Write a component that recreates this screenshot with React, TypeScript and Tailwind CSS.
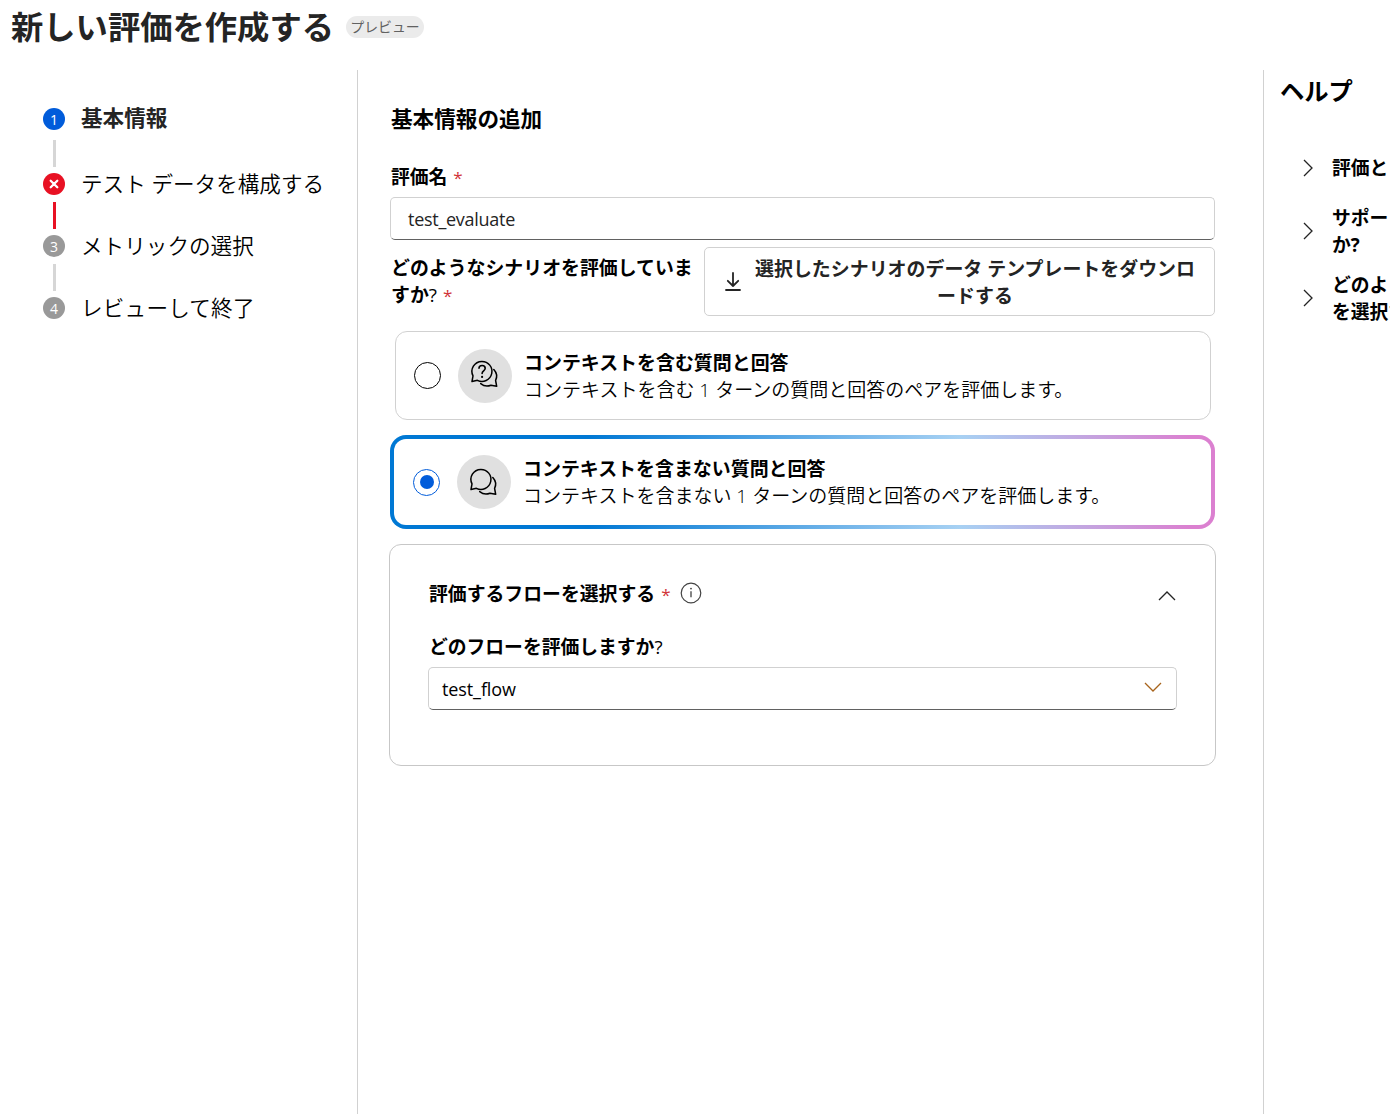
import React from "react";

const steps = [
  { mark: "1", label: "基本情報", circle: "bg-[#015cda]", gap: "mb-[43px]", line: "bg-[#d6d6d6] top-[32px]", text: "font-bold text-[#242424] -top-[1px]" },
  { mark: "x", label: "テスト データを構成する", circle: "bg-[#e81123]", gap: "mb-[40px]", line: "bg-[#e81123] top-[29px]", text: "font-[350] text-black" },
  { mark: "3", label: "メトリックの選択", circle: "bg-[#999999]", gap: "mb-[40px]", line: "bg-[#d6d6d6] top-[29px]", text: "font-[350] text-black" },
  { mark: "4", label: "レビューして終了", circle: "bg-[#999999]", gap: "", line: "", text: "font-[350] text-black tracking-[0.2px]" },
];

function Steps() {
  return (
    <ol className="flex flex-col pl-[43px] pt-[38px]">
      {steps.map((s) => (
        <li key={s.mark} className={`relative flex h-[22px] items-center ${s.gap}`}>
          <span className={`flex size-[22px] shrink-0 items-center justify-center rounded-full text-[14px] leading-none text-white ${s.circle}`}>
            {s.mark === "x" ? (
              <svg width="10" height="10" viewBox="0 0 10 10" stroke="white" strokeWidth="2.3" strokeLinecap="round">
                <path d="M1.7 1.7l6.6 6.6M8.3 1.7l-6.6 6.6" />
              </svg>
            ) : (
              <span className="relative top-[0.5px]">{s.mark}</span>
            )}
          </span>
          <span className={`relative ml-[16px] whitespace-nowrap text-[21.6px] leading-[28px] ${s.text}`}>{s.label}</span>
          {s.line && <span className={`absolute left-[10px] h-[27px] w-[3px] ${s.line}`} />}
        </li>
      ))}
    </ol>
  );
}

function Star() {
  return <span className="ml-[6px] text-[17px] font-normal text-[#d13438]">*</span>;
}

function Chat({ question = false }: { question?: boolean }) {
  return (
    <span className="flex size-[54px] shrink-0 items-center justify-center rounded-full bg-[#e0e0e0]">
      <svg className={question ? "" : "relative top-[2px]"} width="54" height="54" viewBox="0 0 54 54" fill="none" stroke="#000" strokeWidth="1.5" strokeLinejoin="round" strokeLinecap="round">
        <path d="M23.8 12.4a10 10 0 1 1-4.4 18.9l-5.4 1.2 1-5.6A10 10 0 0 1 23.8 12.4z" />
        <path d="M35.8 20.5a10 10 0 0 1 1.8 11l1.1 5.8-5.8-1.1a10.2 10.2 0 0 1-10.2-1.6" />
        {question && (
          <g>
            <path d="M21 19.2c0-3.6 6.2-3.7 6.2.1 0 2.5-3.1 2.6-3.1 5.1" strokeWidth="1.6" />
            <circle cx="24.1" cy="27.9" r="1.1" fill="#000" stroke="none" />
          </g>
        )}
      </svg>
    </span>
  );
}

function Chevron({ className, color = "#242424" }: { className: string; color?: string }) {
  return (
    <svg className={className} width="18" height="10" viewBox="0 0 18 10" fill="none" stroke={color} strokeWidth="1.3">
      <path d="M1 1l8 8 8-8" />
    </svg>
  );
}

function OptionText({ title, body }: { title: string; body: string }) {
  return (
    <div className="ml-[12px] pt-[2px] leading-[27px] whitespace-nowrap">
      <p className="text-[18.95px] font-bold">{title}</p>
      <p className="text-[19px] font-[350]">{body}</p>
    </div>
  );
}

const help = [
  { lines: ["評価と"], cls: "mt-[47px]" },
  { lines: ["サポー", "か?"], cls: "mt-[23px]" },
  { lines: ["どのよ", "を選択す"], cls: "mt-[13px]" },
];

export default function App() {
  return (
    <div className="flex h-[1114px] w-[1390px] flex-col overflow-hidden bg-white font-['Open_Sans','Noto_Sans_CJK_JP',sans-serif] text-[18.8px] text-black">
      <header className="flex h-[70px] items-start pl-[11px]">
        <h1 className="mt-[2px] w-[322px] text-[32.3px] leading-[48px] font-bold whitespace-nowrap text-[#242424]">新しい評価を作成する</h1>
        <span className="mt-[16px] ml-[13px] flex h-[22px] w-[78px] items-center justify-center rounded-full bg-[#ebebeb] text-[13.9px] leading-none whitespace-nowrap text-[#616161]">
          プレビュー
        </span>
      </header>
      <div className="flex flex-1">
        <nav className="w-[358px] shrink-0 border-r border-[#d1d1d1]">
          <Steps />
        </nav>
        <main className="w-[905px] shrink-0 pr-[48px] pl-[32px]">
          <h2 className="mt-[35px] pl-[1px] text-[21.6px] leading-[28px] font-bold">基本情報の追加</h2>
          <div className="mt-[31px] pl-[1px] leading-[27px] font-bold">評価名<Star /></div>
          <div className="mt-[6px] flex h-[43px] items-center rounded-[5px] border border-[#d1d1d1] border-b-[#616161] pt-[1px] pl-[17px] text-[18px] text-[#242424]">
            <span className="tracking-[-0.28px]">test_evaluate</span>
          </div>
          <div className="mt-[7px] flex h-[69px] justify-between">
            <div className="mt-[8px] w-[310px] pl-[1px] text-[18.9px] leading-[27px] font-bold">
              <span className="whitespace-nowrap">どのようなシナリオを評価していま</span>
              <br />
              すか<span className="font-medium">?</span><Star />
            </div>
            <button className="flex w-[511px] items-center rounded-[5px] border border-[#d1d1d1] pl-[19px] text-[#242424]">
              <svg width="18" height="20" viewBox="0 0 18 20" fill="none" stroke="#242424" strokeWidth="1.8" strokeLinecap="round" strokeLinejoin="round">
                <path d="M9 1v13M3.8 8.8L9 14l5.2-5.2M2 18h14" />
              </svg>
              <span className="ml-[12px] w-[442px] pt-[2px] text-center text-[18.95px] leading-[27px] font-bold whitespace-nowrap">
                選択したシナリオのデータ テンプレートをダウンロ
                <br />
                ードする
              </span>
            </button>
          </div>
          <div className="mt-[15px] mr-[4px] ml-[5px] flex h-[89px] items-center rounded-[12px] border border-[#d1d1d1] pl-[18px]">
            <span className="size-[27px] rounded-full border border-black" />
            <span className="ml-[17px]"><Chat question /></span>
            <OptionText title="コンテキストを含む質問と回答" body="コンテキストを含む 1 ターンの質問と回答のペアを評価します。" />
          </div>
          <div className="mt-[15px] flex h-[94px] rounded-[16px] bg-[linear-gradient(90deg,#0078d4_0%,#0078d4_24%,#a7d1f3_69%,#db80d0_97%)] p-[4px]">
            <div className="flex flex-1 items-center rounded-[12px] bg-white pl-[19px]">
              <span className="flex size-[27px] items-center justify-center rounded-full border border-[#015cda]">
                <span className="size-[14px] rounded-full bg-[#015cda]" />
              </span>
              <span className="ml-[17px]"><Chat /></span>
              <OptionText title="コンテキストを含まない質問と回答" body="コンテキストを含まない 1 ターンの質問と回答のペアを評価します。" />
            </div>
          </div>
          <section className="mt-[15px] -mr-[1px] -ml-[1px] h-[222px] rounded-[12px] border border-[#c7c7c7] px-[38px] pt-[36px]">
            <div className="flex h-[27px] items-center">
              <div className="pl-[1px] text-[18.85px] leading-[27px] font-bold whitespace-nowrap">評価するフローを選択する<Star /></div>
              <svg className="relative -top-[2px] ml-[9px]" width="22" height="22" viewBox="0 0 22 22" fill="none">
                <circle cx="11" cy="11" r="9.8" stroke="#424242" strokeWidth="1.2" />
                <path d="M11 9.3v6" stroke="#424242" strokeWidth="1.3" />
                <circle cx="11" cy="6.6" r="0.9" fill="#424242" />
              </svg>
              <Chevron className="relative top-[1px] mr-[1px] ml-auto rotate-180" />
            </div>
            <div className="mt-[26px] pl-[1px] leading-[27px] font-bold">どのフローを評価しますか<span className="font-medium">?</span></div>
            <div className="mt-[6px] flex h-[43px] items-center justify-between rounded-[5px] border border-[#d1d1d1] border-b-[#616161] pt-[1px] pr-[14px] pl-[13px] text-[18px]">
              <span className="tracking-[-0.1px]">test_flow</span>
              <Chevron className="relative -top-[2.5px]" color="#a8641c" />
            </div>
          </section>
        </main>
        <aside className="w-[127px] shrink-0 overflow-hidden border-l border-[#d1d1d1] pl-[16px]">
          <h2 className="mt-[4px] text-[24.3px] leading-[34px] font-bold">ヘルプ</h2>
          {help.map((h) => (
            <div key={h.lines[0]} className={`flex items-center ${h.cls}`}>
              <span className="relative -top-[1px] ml-[19px] flex w-[18px] shrink-0 justify-center">
                <Chevron className="shrink-0 -rotate-90" />
              </span>
              <div className="ml-[15px] leading-[27px] font-bold whitespace-nowrap">
                {h.lines.map((l) => (
                  <p key={l}>{l}</p>
                ))}
              </div>
            </div>
          ))}
        </aside>
      </div>
    </div>
  );
}
